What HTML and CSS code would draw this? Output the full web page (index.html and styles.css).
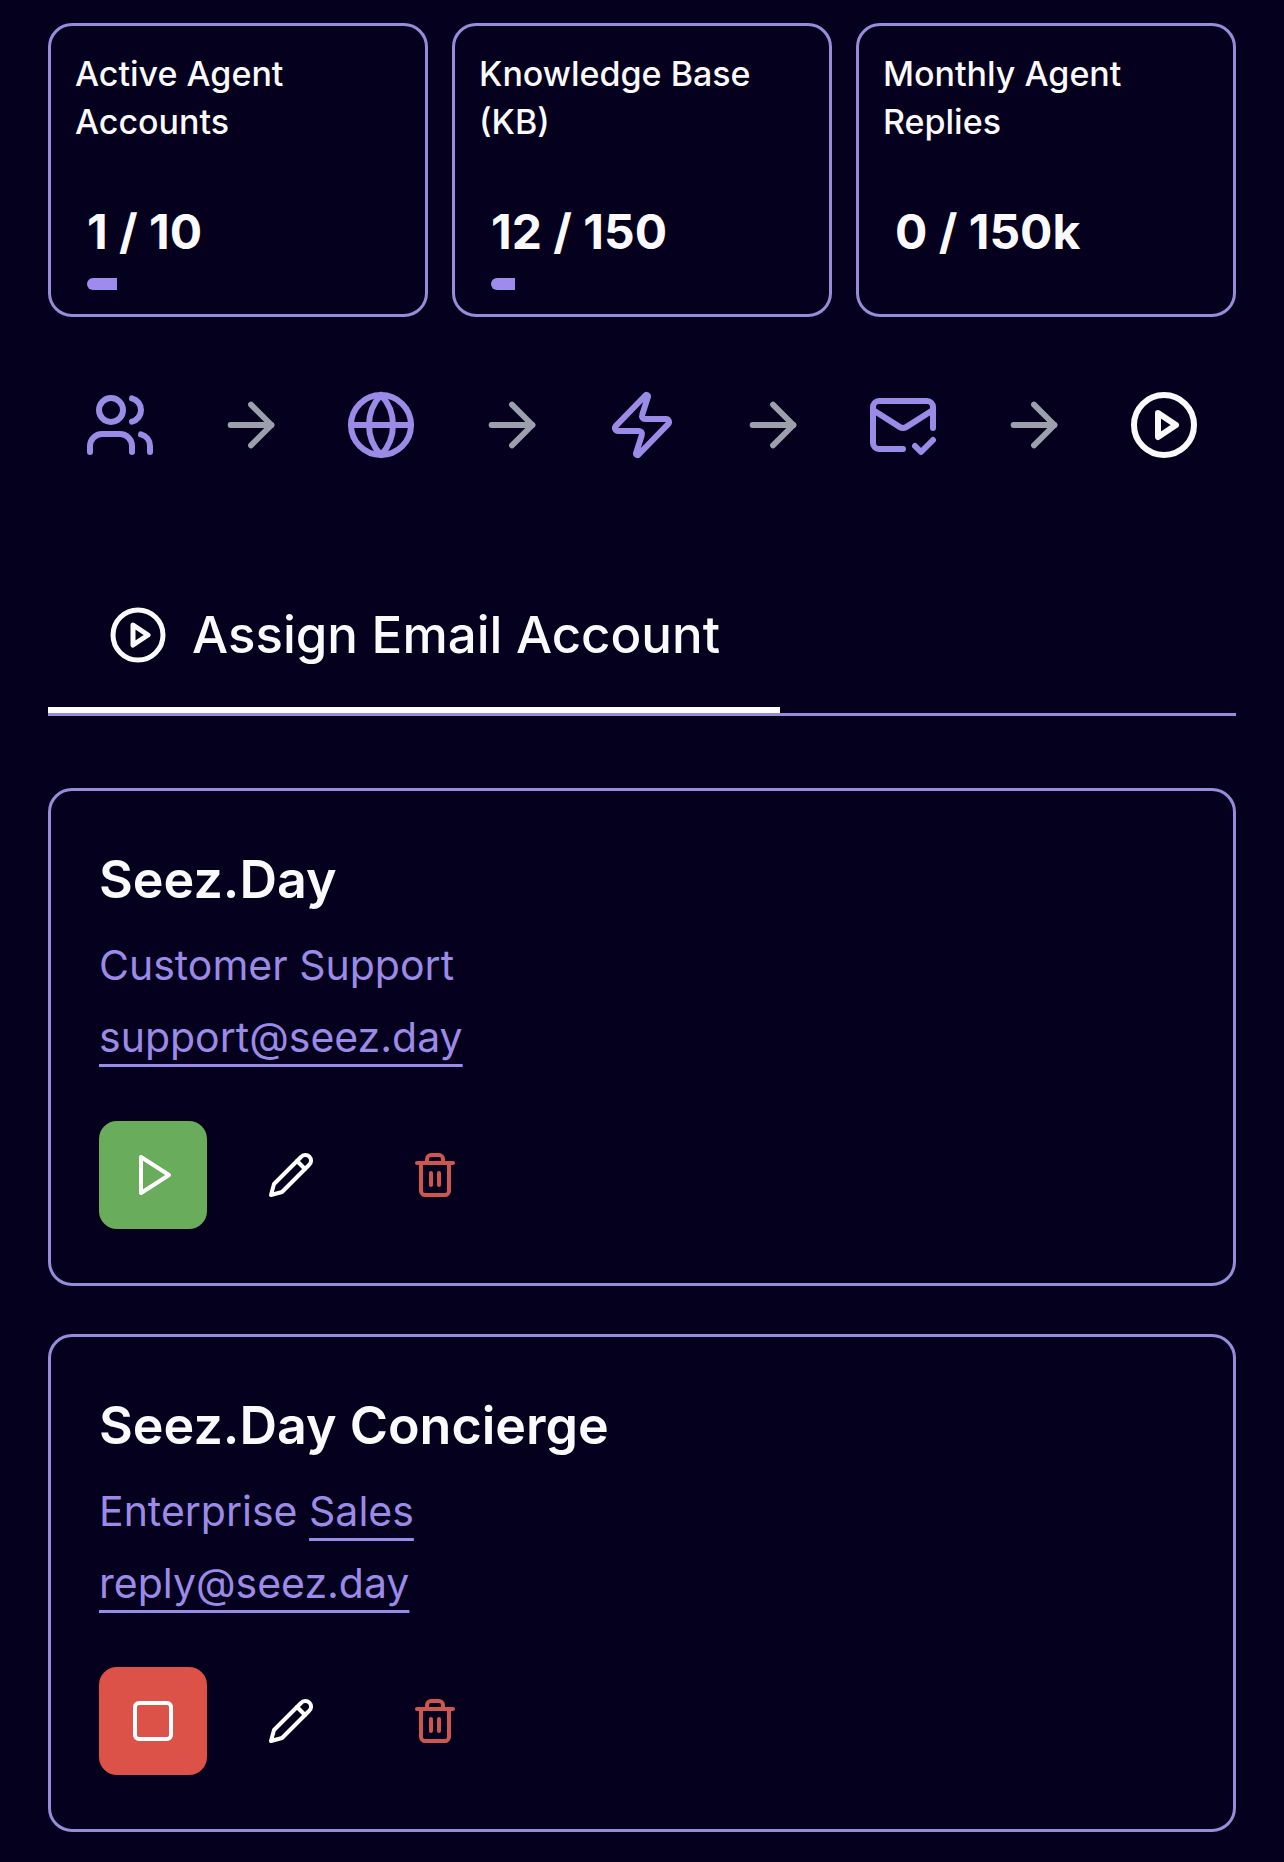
FILE: index.html
```html
<!DOCTYPE html>
<html lang="en">
<head>
<meta charset="utf-8">
<meta name="viewport" content="width=device-width, initial-scale=1">
<title>Assign Email Account</title>
<link rel="stylesheet" href="styles.css">
</head>
<body>
<svg class="sprite" aria-hidden="true">
  <symbol id="users" viewBox="0 0 24 24"><path d="M16 21v-2a4 4 0 0 0-4-4H6a4 4 0 0 0-4 4v2"/><circle cx="9" cy="7" r="4"/><path d="M22 21v-2a4 4 0 0 0-3-3.87"/><path d="M16 3.13a4 4 0 0 1 0 7.75"/></symbol>
  <symbol id="arrow" viewBox="0 0 24 24"><path d="M5 12h14"/><path d="m12 5 7 7-7 7"/></symbol>
  <symbol id="globe" viewBox="0 0 24 24"><circle cx="12" cy="12" r="10"/><path d="M12 2a14.5 14.5 0 0 0 0 20 14.5 14.5 0 0 0 0-20"/><path d="M2 12h20"/></symbol>
  <symbol id="zap" viewBox="0 0 24 24"><path d="M4 14a1 1 0 0 1-.78-1.63l9.9-10.2a.5.5 0 0 1 .86.46l-1.92 6.02A1 1 0 0 0 13 10h7a1 1 0 0 1 .78 1.63l-9.9 10.2a.5.5 0 0 1-.86-.46l1.92-6.02A1 1 0 0 0 11 14z"/></symbol>
  <symbol id="mail-check" viewBox="0 0 24 24"><path d="M22 13V6a2 2 0 0 0-2-2H4a2 2 0 0 0-2 2v12c0 1.1.9 2 2 2h8"/><path d="m22 7-8.97 5.7a1.94 1.94 0 0 1-2.06 0L2 7"/><path d="m16 19 2 2 4-4"/></symbol>
  <symbol id="play-circle" viewBox="0 0 24 24"><circle cx="12" cy="12" r="10"/><path d="m10 8 6 4-6 4z"/></symbol>
  <symbol id="play" viewBox="0 0 24 24"><path d="m6 3 14 9-14 9z"/></symbol>
  <symbol id="square" viewBox="0 0 24 24"><rect width="18" height="18" x="3" y="3" rx="2"/></symbol>
  <symbol id="pencil" viewBox="0 0 24 24"><path d="M17 3a2.85 2.83 0 1 1 4 4L7.5 20.5 2 22l1.5-5.5Z"/><path d="m15 5 4 4"/></symbol>
  <symbol id="trash" viewBox="0 0 24 24"><path d="M3 6h18"/><path d="M19 6v14c0 1-1 2-2 2H7c-1 0-2-1-2-2V6"/><path d="M8 6V4c0-1 1-2 2-2h4c1 0 2 1 2 2v2"/><path d="M10 11v6"/><path d="M14 11v6"/></symbol>
</svg>

<main class="page">
  <section class="stats" aria-label="Usage">
    <article class="stat">
      <h2 class="stat-label">Active Agent Accounts</h2>
      <div class="stat-body">
        <p class="stat-value">1 / 10</p>
        <div class="meter"><div class="meter-fill" style="width: 10%"></div></div>
      </div>
    </article>
    <article class="stat">
      <h2 class="stat-label">Knowledge Base (KB)</h2>
      <div class="stat-body">
        <p class="stat-value">12 / 150</p>
        <div class="meter"><div class="meter-fill" style="width: 8%"></div></div>
      </div>
    </article>
    <article class="stat">
      <h2 class="stat-label">Monthly Agent Replies</h2>
      <div class="stat-body">
        <p class="stat-value">0 / 150k</p>
        <div class="meter"><div class="meter-fill" style="width: 0%"></div></div>
      </div>
    </article>
  </section>

  <nav class="steps" aria-label="Setup steps">
    <button class="step" type="button" aria-label="Agents"><svg class="icon"><use href="#users"/></svg></button>
    <svg class="icon step-arrow" aria-hidden="true"><use href="#arrow"/></svg>
    <button class="step" type="button" aria-label="Knowledge base"><svg class="icon"><use href="#globe"/></svg></button>
    <svg class="icon step-arrow" aria-hidden="true"><use href="#arrow"/></svg>
    <button class="step" type="button" aria-label="Actions"><svg class="icon"><use href="#zap"/></svg></button>
    <svg class="icon step-arrow" aria-hidden="true"><use href="#arrow"/></svg>
    <button class="step" type="button" aria-label="Email accounts"><svg class="icon"><use href="#mail-check"/></svg></button>
    <svg class="icon step-arrow" aria-hidden="true"><use href="#arrow"/></svg>
    <button class="step step-current" type="button" aria-label="Assign email account" aria-current="step"><svg class="icon"><use href="#play-circle"/></svg></button>
  </nav>

  <header class="tabs">
    <h1 class="tab"><svg class="icon tab-icon" aria-hidden="true"><use href="#play-circle"/></svg>Assign Email Account</h1>
  </header>

  <section class="accounts" aria-label="Agents">
    <article class="account">
      <h2 class="account-name">Seez.Day</h2>
      <p class="account-line">Customer Support</p>
      <p class="account-line"><a class="link" href="mailto:support@seez.day">support@seez.day</a></p>
      <div class="actions">
        <button class="action action-start" type="button" aria-label="Start"><svg class="icon"><use href="#play"/></svg></button>
        <button class="action" type="button" aria-label="Edit"><svg class="icon"><use href="#pencil"/></svg></button>
        <button class="action action-delete" type="button" aria-label="Delete"><svg class="icon"><use href="#trash"/></svg></button>
      </div>
    </article>
    <article class="account">
      <h2 class="account-name">Seez.Day Concierge</h2>
      <p class="account-line">Enterprise <a class="link" href="#sales">Sales</a></p>
      <p class="account-line"><a class="link" href="mailto:reply@seez.day">reply@seez.day</a></p>
      <div class="actions">
        <button class="action action-stop" type="button" aria-label="Stop"><svg class="icon"><use href="#square"/></svg></button>
        <button class="action" type="button" aria-label="Edit"><svg class="icon"><use href="#pencil"/></svg></button>
        <button class="action action-delete" type="button" aria-label="Delete"><svg class="icon"><use href="#trash"/></svg></button>
      </div>
    </article>
  </section>
</main>
</body>
</html>
```
FILE: styles.css
```css
:root {
  --bg: #05001e;
  --text: #fafafc;
  --accent: #9b8ae6;
  --line: #998bda;
  --muted: #9ca0ad;
}

* {
  box-sizing: border-box;
}

body {
  margin: 0;
  background: var(--bg);
  color: var(--text);
  font-family: Inter, "Liberation Sans", sans-serif;
}

h1,
h2,
p {
  margin: 0;
}

button {
  padding: 0;
  border: 0;
  background: none;
  color: inherit;
  cursor: pointer;
}

.sprite {
  display: none;
}

.icon {
  display: block;
  flex: none;
  width: 72px;
  height: 72px;
  fill: none;
  stroke: currentColor;
  stroke-width: 2;
  stroke-linecap: round;
  stroke-linejoin: round;
}

.page {
  padding: 23px 48px 30px;
}

/* Usage cards */
.stats {
  display: grid;
  grid-template-columns: repeat(3, 1fr);
  gap: 24px;
}

.stat {
  padding: 24px;
  border: 3px solid var(--line);
  border-radius: 24px;
}

.stat-label {
  font-size: 34px;
  font-weight: 500;
  line-height: 48px;
}

.stat-body {
  margin-top: 50px;
  padding: 0 12px;
}

.stat-value {
  font-size: 48px;
  font-weight: 700;
  line-height: 72px;
}

.meter {
  height: 12px;
  margin-top: 10px;
  border-radius: 6px;
  overflow: hidden;
}

.meter-fill {
  height: 100%;
  background: #9f8bee;
}

/* Step navigation */
.steps {
  display: flex;
  align-items: center;
  justify-content: space-between;
  margin-top: 72px;
}

.step {
  padding: 0 36px;
  color: var(--accent);
}

.step-current {
  color: var(--text);
}

.step-arrow {
  width: 70px;
  height: 70px;
  color: var(--muted);
}

/* Section tab */
.tabs {
  display: flex;
  margin-top: 144px;
  border-bottom: 3px solid var(--line);
}

.tab {
  display: flex;
  align-items: center;
  gap: 24px;
  padding: 0 60px 42px;
  border-bottom: 6px solid #fff;
  font-size: 51px;
  font-weight: 500;
  line-height: 60px;
}

.tab-icon {
  width: 60px;
  height: 60px;
}

/* Account cards */
.accounts {
  display: grid;
  gap: 48px;
  margin-top: 72px;
}

.account {
  padding: 54px 48px;
  border: 3px solid var(--line);
  border-radius: 24px;
}

.account-name {
  margin-bottom: 14px;
  font-size: 52px;
  font-weight: 600;
  line-height: 70px;
}

.account-line {
  color: var(--accent);
  font-size: 41px;
  line-height: 72px;
}

.link {
  color: inherit;
  text-decoration: underline 3px;
  text-decoration-skip-ink: none;
  text-underline-offset: 12px;
}

.actions {
  display: flex;
  gap: 24px;
  margin-top: 48px;
}

.action {
  display: grid;
  place-items: center;
  width: 120px;
  height: 108px;
  border-radius: 18px;
  color: #fff;
}

.action .icon {
  width: 48px;
  height: 48px;
}

.action-start,
.action-stop {
  width: 108px;
}

.action-start {
  background: #69ad5c;
}

.action-stop {
  background: #dc5249;
}

.action-delete {
  color: #cd5650;
}
```
